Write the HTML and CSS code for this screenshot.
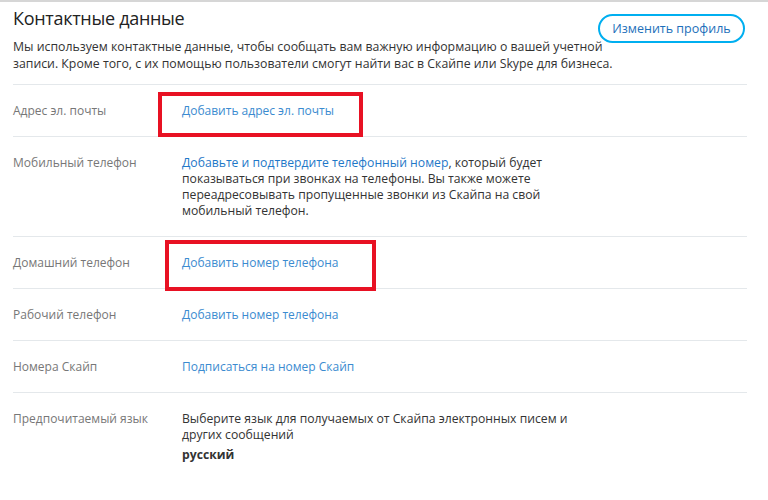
FILE: index.html
```html
<!DOCTYPE html>
<html lang="ru">
<head>
<meta charset="utf-8">
<title>Контактные данные</title>
<link rel="stylesheet" href="styles.css">
</head>
<body>
<div class="page">
  <div class="header">
    <h1 class="title">Контактные данные</h1>
    <button class="edit-btn">Изменить профиль</button>
  </div>
  <p class="intro">Мы используем контактные данные, чтобы сообщать вам важную информацию о вашей учетной записи. Кроме того, с их помощью пользователи смогут найти вас в Скайпе или Skype для бизнеса.</p>
  <div class="rows">
    <div class="row">
      <div class="label">Адрес эл. почты</div>
      <div class="value"><a class="link">Добавить адрес эл. почты</a></div>
    </div>
    <div class="row">
      <div class="label">Мобильный телефон</div>
      <div class="value"><a class="link strong-link">Добавьте и подтвердите телефонный номер</a><span>, который будет показываться при звонках на телефоны. Вы также можете переадресовывать пропущенные звонки из Скайпа на свой мобильный телефон.</span></div>
    </div>
    <div class="row">
      <div class="label">Домашний телефон</div>
      <div class="value"><a class="link">Добавить номер телефона</a></div>
    </div>
    <div class="row">
      <div class="label">Рабочий телефон</div>
      <div class="value"><a class="link">Добавить номер телефона</a></div>
    </div>
    <div class="row">
      <div class="label">Номера Скайп</div>
      <div class="value"><a class="link">Подписаться на номер Скайп</a></div>
    </div>
    <div class="row last">
      <div class="label">Предпочитаемый язык</div>
      <div class="value">
        <div>Выберите язык для получаемых от Скайпа электронных писем и других сообщений</div>
        <div class="lang">русский</div>
      </div>
    </div>
  </div>
  <div class="highlight hl-email"></div>
  <div class="highlight hl-home"></div>
</div>
</body>
</html>
```

FILE: styles.css
```css
html, body {
  margin: 0;
  padding: 0;
  background: #ffffff;
}
body {
  font-family: "Open Sans", "Noto Sans", "Liberation Sans", sans-serif;
  color: #333333;
  width: 768px;
  height: 500px;
  overflow: hidden;
  border-top: 2px solid #d6d6d6;
  box-sizing: border-box;
}
.page {
  position: relative;
  padding: 0 21px 0 13px;
}
.header {
  display: flex;
  justify-content: space-between;
  align-items: flex-start;
}
.title {
  margin: 3px 0 0 0;
  font-size: 18px;
  font-weight: 400;
  color: #222222;
  line-height: 26px;
  letter-spacing: -0.3px;
}
.edit-btn {
  margin: 12px 2px 0 0;
  height: 29px;
  width: 147px;
  border: 2px solid #00aff0;
  border-radius: 15px;
  background: #ffffff;
  color: #1d6fba;
  font-family: inherit;
  font-size: 12.5px;
  padding: 0;
}
.intro {
  margin: -5px 0 0 0;
  font-size: 12.3px;
  line-height: 17px;
  color: #333333;
  max-width: 612px;
  padding-bottom: 12px;
}
.rows {
  border-top: 1px solid #e4e8eb;
}
.row {
  display: grid;
  grid-template-columns: 169px 1fr;
  padding: 18px 0 17px 0;
  border-bottom: 1px solid #e4e8eb;
  font-size: 12.2px;
  line-height: 16px;
}
.row.last {
  border-bottom: none;
}
.label {
  color: #777777;
  font-size: 12px;
}
.value {
  color: #333333;
  max-width: 405px;
}
.link {
  color: #3b8bd0;
  text-decoration: none;
  font-size: 12px;
}
.strong-link {
  color: #1f78c8;
  font-size: 12.2px;
}
.lang {
  font-weight: 700;
  margin-top: 4px;
}
.highlight {
  position: absolute;
  border: 4px solid #e81123;
  box-sizing: border-box;
}
.hl-email {
  left: 158px;
  top: 90px;
  width: 205px;
  height: 45px;
}
.hl-home {
  left: 165px;
  top: 238px;
  width: 211px;
  height: 51px;
}
```
